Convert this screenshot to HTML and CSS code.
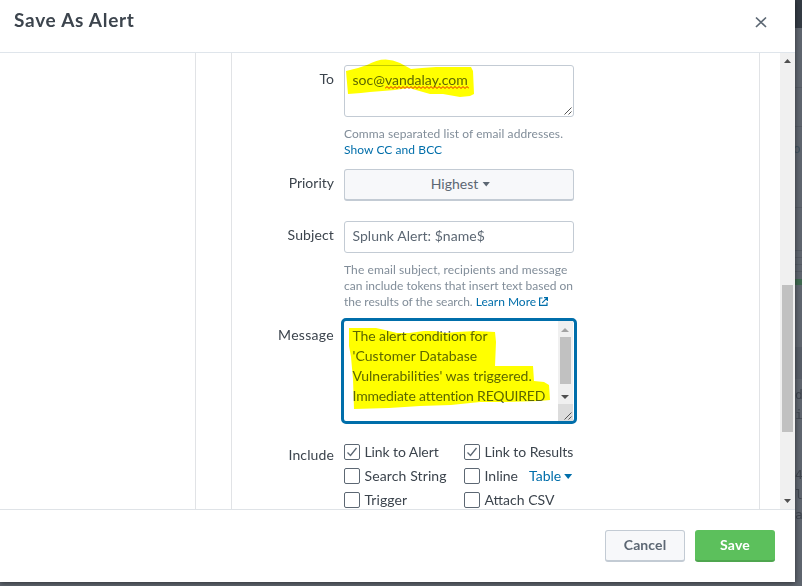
FILE: index.html
```
<!DOCTYPE html>
<html lang="en">
<head>
<meta charset="utf-8">
<title>Save As Alert</title>
<link rel="stylesheet" href="styles.css">
</head>
<body>
<div class="backdrop" aria-hidden="true">
  <i class="topbar"></i><i class="line l1"></i><i class="line l2"></i><i class="line l3"></i><i class="line l4"></i><i class="line l5"></i><i class="line l6"></i><i class="line l7"></i><i class="green"></i><i class="band"></i>
  <span class="bg-text t0">o</span><span class="bg-text t1">d</span><span class="bg-text t2">i</span><span class="bg-text t3">4</span><span class="bg-text t4">l</span><span class="bg-text t5">a</span>
</div>
<div class="modal">
  <header class="head">
    <h1><span class="title">Save As Alert</span></h1>
    <svg class="close" width="12" height="12" viewBox="0 0 12 12"><path d="M1 1.500l10 9.500M11 1.500l-10 9.500"/></svg>
  </header>
  <div class="body">
    <div class="side"></div>
    <div class="panel">
      <div class="row row-to">
        <label>To</label>
        <div class="control">
          <div class="box area">
            <span class="w-mail">soc@<span class="misspelt">vandalay.com<svg class="squiggle" width="84" height="3" viewBox="0 0 84 3"><path d="M0 2.500l2-2 2 2 2-2 2 2 2-2 2 2 2-2 2 2 2-2 2 2 2-2 2 2 2-2 2 2 2-2 2 2 2-2 2 2 2-2 2 2 2-2 2 2 2-2 2 2 2-2 2 2 2-2 2 2 2-2 2 2 2-2 2 2 2-2 2 2 2-2 2 2 2-2 2 2 2-2 2 2 2-2 2 2"/></svg></span></span>
            <svg class="grip" width="8" height="8" viewBox="0 0 8 8"><path d="M0.500 7.500l7-7M4.500 7.500l3-3"/></svg>
            <svg class="marker" width="132" height="42" viewBox="346 59 132 42"><path d="M346 71L358 68 367 65Q384 55 400 63L411 69 422 68 436 67 471 67 473 71 474 94 470 96 460 97 443 94 430 94 409 88 395 90 370 92 361 93 348 94Z"/></svg>
          </div>
          <p class="help"><span class="w-comma">Comma separated list of email addresses.</span><br><a class="w-show">Show CC and BCC</a></p>
        </div>
      </div>
      <div class="row row-priority">
        <label class="w-priority">Priority</label>
        <div class="control"><div class="box select"><span class="w-highest">Highest</span><i class="caret"></i></div></div>
      </div>
      <div class="row row-subject">
        <label class="w-subject">Subject</label>
        <div class="control">
          <div class="box input"><span class="w-splunk">Splunk Alert: $name$</span></div>
          <p class="help"><span class="w-h1">The email subject, recipients and message</span><br><span class="w-h2">can include tokens that insert text based on</span><br><span class="w-h3">the results of the search.</span> <a class="w-learn">Learn More</a><svg class="ext" width="9" height="9" viewBox="0 0 9 9"><path d="M3.500 1H0.600V8.400H8V5.500M5 0.600H8.400V4M8.400 0.600L3.200 5.800"/></svg></p>
        </div>
      </div>
      <div class="row row-message">
        <label class="w-message">Message</label>
        <div class="message">
          <div class="text"><span class="w-m1">The alert condition for</span><br><span class="w-m2">'Customer Database</span><br><span class="w-m3">Vulnerabilities' was triggered.</span><br><span class="w-m4">Immediate attention REQUIRED</span></div>
          <div class="mini-scroll">
            <svg width="14" height="14" viewBox="0 0 14 14"><path class="pale" d="M3 11L7 7 11 11Z"/></svg>
            <i></i>
            <svg class="down" width="14" height="14" viewBox="0 0 14 14"><path d="M3 5L7 9 11 5Z"/></svg>
            <span><svg class="grip" width="8" height="8" viewBox="0 0 8 8"><path d="M0.500 7.500l7-7M4.500 7.500l3-3"/></svg></span>
          </div>
          <svg class="marker" width="204" height="84" viewBox="348 327 204 84"><path d="M349 328L376 328 385 330 397 333 409 333 424 331 435 331 445 333 457 332 476 331 495 332 496 342 495 366 533 366 534 381 544 382 549 385 550 400 539 401 506 402 480 402 451 405 420 406 389 408 354 409 353 379 351 357 349 346Z"/></svg>
        </div>
      </div>
      <div class="row row-include">
        <label class="w-include">Include</label>
        <div class="checks">
          <div><i class="check"><svg width="14" height="14" viewBox="0 0 14 14"><path d="M2.500 7.500l3 3 6-7.500"/></svg></i><span class="w-c1">Link to Alert</span></div>
          <div><i class="check"><svg width="14" height="14" viewBox="0 0 14 14"><path d="M2.500 7.500l3 3 6-7.500"/></svg></i><span class="w-c2">Link to Results</span></div>
          <div><i class="check"></i><span class="w-c3">Search String</span></div>
          <div><i class="check"></i><span class="w-c4">Inline</span><a class="table">Table</a><i class="caret blue"></i></div>
          <div><i class="check"></i><span class="w-c5">Trigger</span></div>
          <div><i class="check"></i><span class="w-c6">Attach CSV</span></div>
        </div>
      </div>
    </div>
    <div class="scroll">
      <svg width="15" height="15" viewBox="0 0 15 15"><path d="M4 10L7.500 6 11 10Z"/></svg>
      <i></i>
      <svg class="down" width="15" height="15" viewBox="0 0 15 15"><path d="M4 5L7.500 9 11 5Z"/></svg>
    </div>
  </div>
  <footer class="foot"><div class="btn cancel"><span>Cancel</span></div><div class="btn save"><span>Save</span></div></footer>
</div>
</body>
</html>
```
FILE: styles.css
```
* { box-sizing: border-box; }
html, body { height: 100%; }
body {
  margin: 0; overflow: hidden; position: relative; background: #5f656e;
  font: 14px/20px Lato, "Open Sans", sans-serif; color: #3c444d;
}
h1, p { margin: 0; }
a { color: #006eaa; }
span, a { white-space: nowrap; }
i { display: block; font-style: normal; }
svg { display: block; flex: none; }

.backdrop { position: absolute; inset: 0; overflow: hidden; }
.backdrop > * { position: absolute; left: 795px; width: 7px; }
.topbar { top: 0; height: 28px; background: #343b44; }
.line { height: 1px; background: #555b64; }
.l1 { top: 87px; } .l2 { top: 126px; } .l3 { top: 207px; } .l4 { top: 250px; }
.l5 { top: 257px; } .l6 { top: 264px; } .l7 { top: 271px; }
.green { top: 279px; height: 6px; background: #3f6850; }
.band { top: 347px; height: 32px; background: #575d67; }
.backdrop .bg-text { font: 13px/16px "DejaVu Sans Mono", monospace; color: #40464f; width: auto; }
.backdrop .t0 { top: 141px; left: 793px; color: #40525f; }
.t1 { top: 387px; } .t2 { top: 407px; } .t3 { top: 467px; } .t4 { top: 487px; } .t5 { top: 507px; }

.modal {
  position: relative; width: 795px; height: 582px; background: #fff;
  display: flex; flex-direction: column; box-shadow: 0 1px 5px rgba(0, 0, 0, .5);
}
.head {
  height: 53px; border-bottom: 1px solid #dfe5eb; padding: 9px 28px 0 14px;
  display: flex; justify-content: space-between;
}
h1 { font-size: 19px; line-height: 22px; font-weight: 700; }
.title { letter-spacing: .72px; }
.close { margin-top: 7px; fill: none; stroke: #5c6773; stroke-width: 1.7; }
.body { height: 456px; display: flex; overflow: hidden; }
.side { width: 196px; border-right: 1px solid #e1e3e6; }
.panel {
  width: 529px; margin-left: 35px; border: solid #e1e3e6; border-width: 0 1px;
  padding-top: 12px;
}
.row { display: flex; gap: 10px; }
.row > label { width: 102px; text-align: right; padding-top: 4px; white-space: nowrap; }
.row-to { height: 104px; }
.row-priority { height: 52px; }
.row-subject { height: 98px; }
.row-message { height: 125px; }
.row-message > label { padding-top: 6px; }
.row-include > label { padding-top: 1px; }
.control { width: 230px; }
.box { position: relative; border: 1px solid #c3cbd4; border-radius: 3px; padding: 4px 7px 4px 7.5px; color: #5c6773; }
.area { height: 52px; }
.input { height: 32px; }
.select {
  height: 32px; display: flex; justify-content: center; align-items: center; gap: 4px;
  background: #f7f8fa; border-bottom-width: 2px; padding: 0 0 1px 3px;
}
.caret { width: 8px; height: 5px; background: #5c6773; clip-path: polygon(0 0, 100% 0, 50% 100%); }
.help { font-size: 12px; line-height: 16px; margin-top: 9px; color: #818d99; }
.misspelt { position: relative; }
.squiggle { position: absolute; left: 0; top: 15px; fill: none; stroke: #e02020; stroke-width: 1; }
.grip { fill: none; stroke: #555; stroke-width: 1; }
.area .grip { position: absolute; right: 1px; bottom: 1px; }
.marker { position: absolute; fill: #ff0; mix-blend-mode: multiply; }
.area .marker { left: 1px; top: -7px; }
.ext { display: inline-block; margin-left: 3px; fill: none; stroke: #006eaa; stroke-width: 1.2; }
.message {
  position: relative; width: 236px; height: 106px; margin: -1px 0 0 -3px; padding: 0 1px 0 8.5px;
  display: flex; justify-content: space-between; border: 3px solid #006eaa; border-radius: 5px;
}
.text { padding-top: 5px; color: #5c6773; }
.message .marker { left: 4px; top: 6px; }
.mini-scroll { width: 15px; background: #f0f0f0; display: flex; flex-direction: column; }
.mini-scroll > i { width: 11px; height: 47px; margin: 2px 0 0 2px; background: #c1c1c1; }
.mini-scroll .down { margin-top: 6px; }
.mini-scroll span { flex: 1; background: #dcdcdc; display: flex; justify-content: flex-end; align-items: flex-end; padding: 1px; }
.down path, .scroll path { fill: #505050; }
.mini-scroll .pale { fill: #a3a3a3; }
.checks { display: grid; grid-template-columns: 120px 130px; grid-auto-rows: 24px; }
.checks > div { display: flex; }
.check { width: 16px; height: 16px; border: 1px solid #5c6773; border-radius: 2px; margin-right: 4.5px; flex: none; }
.check path { fill: none; stroke: #5c6773; stroke-width: 1.3; }
.checks span, .table { line-height: 16px; }
.table { margin-left: 11px; }
.blue { background: #006eaa; margin: 6px 0 0 3px; }
.scroll { width: 15px; margin-left: auto; background: #f0f0f0; display: flex; flex-direction: column; }
.scroll > i { width: 11px; height: 147px; margin: 217px 0 0 2px; background: #c1c1c1; }
.scroll .down { margin-top: auto; }
.foot { flex: 1; border-top: 1px solid #dfe3e7; padding: 20px 20px 0; display: flex; justify-content: flex-end; gap: 10px; }
.btn { width: 80px; height: 32px; border-radius: 3px; text-align: center; font-weight: 700; line-height: 30px; }
.cancel { background: #f7f8fa; border: 1px solid #c3cbd4; border-bottom-width: 2px; color: #5c6773; line-height: 28px; letter-spacing: .1px; }
.save { background: #5cc05c; border-bottom: 2px solid #4fa64f; color: #fff; letter-spacing: .2px; }

/* Per-string tracking */
.w-comma { letter-spacing: .08px; }
.w-show { letter-spacing: .07px; }
.w-h1 { letter-spacing: .1px; }
.w-h3 { letter-spacing: -.02px; }
.w-message { letter-spacing: .3px; }
.w-subject, .w-include { letter-spacing: .12px; }
.w-splunk { letter-spacing: .03px; }
.w-m1 { letter-spacing: -.1px; }
.w-m2 { letter-spacing: .06px; }
.w-m4 { letter-spacing: -.17px; }
.w-c1 { letter-spacing: -.1px; }
.w-c2 { letter-spacing: -.05px; }
.w-c3 { letter-spacing: .12px; }
.w-c5 { letter-spacing: .1px; }
```
